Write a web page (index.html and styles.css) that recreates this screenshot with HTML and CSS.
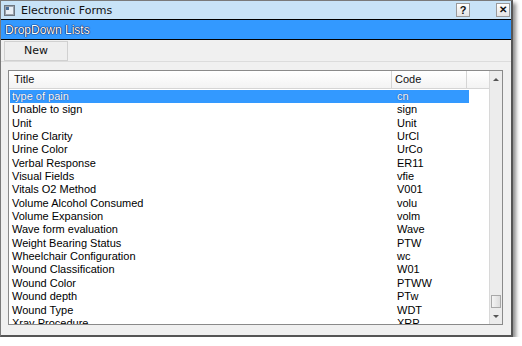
FILE: index.html
```html
<!DOCTYPE html>
<html>
<head>
<meta charset="utf-8">
<link rel="stylesheet" href="styles.css">
</head>
<body>
<div class="window">
  <div class="titlebar">
    <svg class="appicon" width="11" height="11" viewBox="0 0 11 11">
      <rect x="0.5" y="0.5" width="10" height="10" fill="#9aa3ad" stroke="#6d7680"/>
      <rect x="2" y="2" width="7" height="7" fill="#e8eef4"/>
      <rect x="2" y="2" width="3" height="3" fill="#4a6f9a"/>
    </svg>
    <span class="wtitle">Electronic Forms</span>
    <span class="tbtn help">?</span>
    <span class="tbtn close">✕</span>
  </div>
  <div class="banner">DropDown Lists</div>
  <div class="toolbar"><button class="newbtn">New</button></div>
  <div class="content">
    <div class="listview">
      <div class="lvmain">
        <div class="header">
          <div class="hcol c1">Title</div>
          <div class="hcol c2">Code</div>
          <div class="hcol c3"></div>
        </div>
        <div class="rows">
          <div class="row sel"><span class="t">type of pain</span><span class="c">cn</span></div>
          <div class="row"><span class="t">Unable to sign</span><span class="c">sign</span></div>
          <div class="row"><span class="t">Unit</span><span class="c">Unit</span></div>
          <div class="row"><span class="t">Urine Clarity</span><span class="c">UrCl</span></div>
          <div class="row"><span class="t">Urine Color</span><span class="c">UrCo</span></div>
          <div class="row"><span class="t">Verbal Response</span><span class="c">ER11</span></div>
          <div class="row"><span class="t">Visual Fields</span><span class="c">vfie</span></div>
          <div class="row"><span class="t">Vitals O2 Method</span><span class="c">V001</span></div>
          <div class="row"><span class="t">Volume Alcohol Consumed</span><span class="c">volu</span></div>
          <div class="row"><span class="t">Volume Expansion</span><span class="c">volm</span></div>
          <div class="row"><span class="t">Wave form evaluation</span><span class="c">Wave</span></div>
          <div class="row"><span class="t">Weight Bearing Status</span><span class="c">PTW</span></div>
          <div class="row"><span class="t">Wheelchair Configuration</span><span class="c">wc</span></div>
          <div class="row"><span class="t">Wound Classification</span><span class="c">W01</span></div>
          <div class="row"><span class="t">Wound Color</span><span class="c">PTWW</span></div>
          <div class="row"><span class="t">Wound depth</span><span class="c">PTw</span></div>
          <div class="row"><span class="t">Wound Type</span><span class="c">WDT</span></div>
          <div class="row"><span class="t">Xray Procedure</span><span class="c">XRP</span></div>
        </div>
      </div>
      <div class="scrollbar">
        <div class="arrow up"></div>
        <div class="track"><div class="thumb"></div></div>
        <div class="arrow down"></div>
      </div>
    </div>
  </div>
</div>
</body>
</html>
```

FILE: styles.css
```css
html, body {
  margin: 0;
  padding: 0;
  background: #ffffff;
}
body {
  font-family: "Liberation Sans", Arial, sans-serif;
  font-size: 11px;
  color: #000;
}
.window {
  width: 510px;
  height: 334px;
  border: 1px solid #7a7a7a;
  border-right: 2px solid #555;
  border-bottom: 2px solid #555;
  background: #f0f0f0;
  box-shadow: 3px 3px 4px rgba(0, 0, 0, 0.45);
  display: flex;
  flex-direction: column;
  overflow: hidden;
}
.titlebar {
  flex: none;
  height: 18px;
  background: #c8e3f7;
  display: flex;
  align-items: center;
  padding-left: 3px;
  padding-right: 1px;
  gap: 6px;
}
.appicon { flex: none; }
.wtitle {
  font-family: "DejaVu Sans", "Liberation Sans", sans-serif;
  font-size: 11px;
  color: #111;
  flex: 1;
}
.tbtn {
  width: 12px;
  height: 12px;
  border: 1px solid #9a9a9a;
  background: linear-gradient(#ffffff, #e4e4e4);
  font-size: 11px;
  font-weight: bold;
  line-height: 12px;
  text-align: center;
  color: #111;
}
.help { margin-right: 20px; }
.close { font-size: 10px; }
.banner {
  flex: none;
  height: 19px;
  background: #3399ff;
  border-top: 1px solid #000;
  border-bottom: 1px solid #000;
  color: #fff;
  font-size: 12px;
  line-height: 20px;
  padding-left: 4px;
  text-shadow: 0 0 1px #000d40, 0 0 1px #000d40, 0 0 1px #000d40;
}
.toolbar {
  flex: none;
  height: 21px;
  border-bottom: 1px solid #dcdcdc;
  display: flex;
  align-items: center;
  padding-left: 3px;
}
.newbtn {
  width: 64px;
  height: 20px;
  border: 1px solid #d0d0d0;
  background: #eeeeee;
  font-family: "DejaVu Sans", "Liberation Sans", sans-serif;
  font-size: 11px;
  color: #111;
  padding: 0;
}
.content {
  flex: 1;
  min-height: 0;
  padding: 8px 8px 10px 7px;
  display: flex;
}
.listview {
  flex: 1;
  min-height: 0;
  border: 1px solid #8a8a8a;
  background: #fff;
  display: flex;
  overflow: hidden;
}
.lvmain {
  flex: 1;
  min-height: 0;
  display: flex;
  flex-direction: column;
  overflow: hidden;
}
.header {
  flex: none;
  height: 17px;
  display: flex;
  border-bottom: 1px solid #d5d5d5;
  background: linear-gradient(#ffffff, #f3f3f3);
}
.hcol {
  line-height: 17px;
  border-right: 1px solid #d5d5d5;
  color: #111;
}
.c1 { width: 377px; padding-left: 5px; }
.c2 { width: 71px; padding-left: 3px; }
.c3 { flex: 1; border-right: none; }
.rows {
  flex: 1;
  min-height: 0;
  overflow: hidden;
  padding-top: 1px;
}
.row {
  height: 13.35px;
  line-height: 13px;
  display: flex;
  width: 459px;
  margin-left: 1px;
  white-space: nowrap;
}
.row .t { width: 382px; padding-left: 2px; }
.row .c { flex: 1; padding-left: 3px; }
.row.sel { background: #3399ff; color: #fff; text-shadow: 0 0 1px #001a66; }
.scrollbar {
  flex: none;
  width: 12px;
  background: #ececec;
  border-left: 1px solid #d8d8d8;
  display: flex;
  flex-direction: column;
}
.arrow {
  flex: none;
  height: 16px;
  display: flex;
  align-items: center;
  justify-content: center;
}
.arrow.up::before {
  content: "";
  border-left: 3px solid transparent;
  border-right: 3px solid transparent;
  border-bottom: 3px solid #555;
}
.arrow.down::before {
  content: "";
  border-left: 3px solid transparent;
  border-right: 3px solid transparent;
  border-top: 3px solid #555;
}
.track {
  flex: 1;
  display: flex;
  flex-direction: column;
  justify-content: flex-end;
  padding: 0 1px 0 1px;
}
.thumb {
  height: 11px;
  border: 1px solid #a8a8a8;
  background: linear-gradient(90deg, #f4f4f4, #dcdcdc);
}
```
